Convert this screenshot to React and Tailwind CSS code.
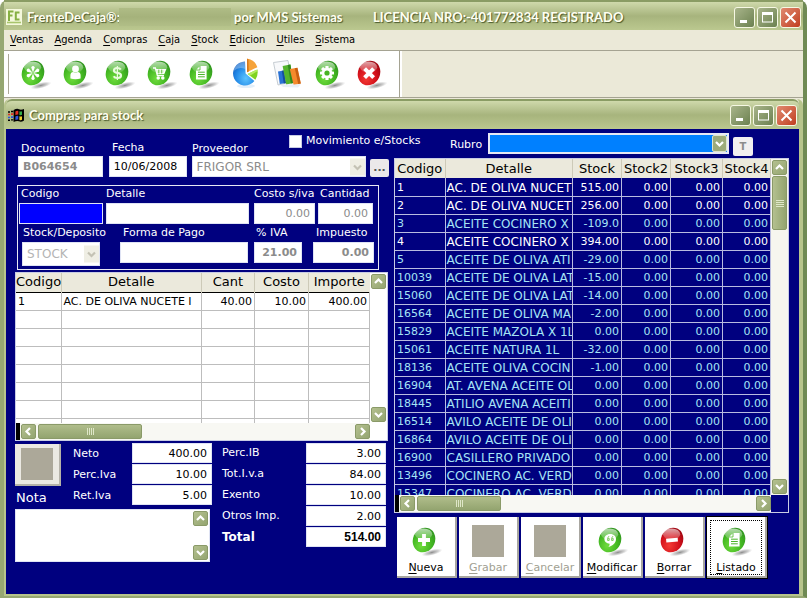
import { useState } from 'react';
import { clsx } from 'clsx';

const menus = ['Ventas', 'Agenda', 'Compras', 'Caja', 'Stock', 'Edicion', 'Utiles', 'Sistema'];

const stockRows = [
  ['1', 'AC. DE OLIVA NUCET', '515.00'],
  ['2', 'AC. DE OLIVA NUCET', '256.00'],
  ['3', 'ACEITE COCINERO X', '-109.0'],
  ['4', 'ACEITE COCINERO X', '394.00'],
  ['5', 'ACEITE DE OLIVA ATI', '-29.00'],
  ['10039', 'ACEITE DE OLIVA LAT', '-15.00'],
  ['15060', 'ACEITE DE OLIVA LAT', '-14.00'],
  ['16564', 'ACEITE DE OLIVA MA', '-2.00'],
  ['15829', 'ACEITE MAZOLA X 1L', '0.00'],
  ['15061', 'ACEITE NATURA 1L', '-32.00'],
  ['18136', 'ACEITE OLIVA COCIN', '-1.00'],
  ['16904', 'AT. AVENA ACEITE OL', '0.00'],
  ['18445', 'ATILIO AVENA ACEITI', '0.00'],
  ['16514', 'AVILO ACEITE DE OLI', '0.00'],
  ['16864', 'AVILO ACEITE DE OLI', '0.00'],
  ['16900', 'CASILLERO PRIVADO', '0.00'],
  ['13496', 'COCINERO AC. VERD', '0.00'],
  ['15347', 'COCINERO AC. VERD', '0.00'],
];

const itemRows = [
  ['1', 'AC. DE OLIVA NUCETE I', '40.00', '10.00', '400.00'],
  ...Array.from({ length: 7 }, () => ['', '', '', '', '']),
];

/* ---------- icons ---------- */

function Gradients() {
  return (
    <svg width="0" height="0" className="absolute" aria-hidden="true">
      <defs>
        <radialGradient id="orbGreen" cx="0.5" cy="0.75" r="0.75">
          <stop offset="0" stopColor="#6fdc3c" />
          <stop offset="0.6" stopColor="#43b722" />
          <stop offset="1" stopColor="#2f931e" />
        </radialGradient>
        <radialGradient id="orbRed" cx="0.5" cy="0.75" r="0.75">
          <stop offset="0" stopColor="#f33a34" />
          <stop offset="0.6" stopColor="#d3101a" />
          <stop offset="1" stopColor="#9c0510" />
        </radialGradient>
        <linearGradient id="orbGloss" x1="0" y1="0" x2="0" y2="1">
          <stop offset="0" stopColor="#fff" stopOpacity="0.65" />
          <stop offset="1" stopColor="#fff" stopOpacity="0.1" />
        </linearGradient>
        <radialGradient id="orbShadow">
          <stop offset="0" stopColor="#666" stopOpacity="0.75" />
          <stop offset="0.6" stopColor="#999" stopOpacity="0.45" />
          <stop offset="1" stopColor="#bbb" stopOpacity="0" />
        </radialGradient>
        <radialGradient id="pieBlue" cx="0.6" cy="0.7" r="0.8">
          <stop offset="0" stopColor="#5cc4ff" />
          <stop offset="0.6" stopColor="#2187e6" />
          <stop offset="1" stopColor="#1257b8" />
        </radialGradient>
      </defs>
    </svg>
  );
}

const glyphs = {
  asterisk: (
    <g fill="#fff">
      {[0, 60, 120, 180, 240, 300].map((a) => (
        <path key={a} d="M13 12.8 L11.2 7.2 Q13 4.6 14.8 7.2 Z" transform={`rotate(${a} 13 13)`} />
      ))}
    </g>
  ),
  user: (
    <g fill="#fff">
      <circle cx="13.5" cy="9" r="3.4" />
      <path d="M8.4 18.5 V15.5 Q8.4 12.4 11.2 12 Q13.5 13.6 15.8 12 Q18.6 12.4 18.6 15.5 V18.5 Q13.5 20 8.4 18.5 Z" />
    </g>
  ),
  money: (
    <g fill="none" stroke="#e9fbdc" strokeWidth="2.2">
      <path d="M16.8 9.6 Q15.8 8 13.2 8 Q10 8 10 10.4 Q10 12.4 13.3 12.9 Q17 13.4 17 15.6 Q17 18 13.6 18 Q10.6 18 9.7 16.2" />
      <path d="M13.4 6 V20" strokeWidth="1.3" />
    </g>
  ),
  cart: (
    <g fill="none" stroke="#fff" strokeWidth="1.3">
      <path d="M7 8 H9.4 L11.4 15.6 H18" />
      <path d="M9.8 9.6 H19.4 L17.8 13.6 H11" fill="#e6f9da" />
      <path d="M12.8 9.6 V13.4 M15.7 9.6 V13.4" stroke="#45b022" strokeWidth="0.8" />
      <circle cx="12.2" cy="18" r="1.1" fill="#fff" />
      <circle cx="16.8" cy="18" r="1.1" fill="#fff" />
    </g>
  ),
  doc: (
    <g>
      <path d="M12 6 H18.6 V19.4 H8 V10 Z" fill="#fff" />
      <path d="M12 6 V10 H8" fill="none" stroke="#4cb52a" strokeWidth="0.8" />
      <path d="M10 12.2 H16.8 M10 14.5 H16.8 M10 16.8 H16.8" stroke="#4cb52a" strokeWidth="1" />
    </g>
  ),
  gear: (
    <g>
      {[0, 45, 90, 135].map((a) => (
        <rect key={a} x="11.4" y="6" width="3.2" height="14" rx="0.6" fill="#fff" transform={`rotate(${a} 13 13)`} />
      ))}
      <circle cx="13" cy="13" r="5.2" fill="#fff" />
      <circle cx="13" cy="13" r="2.6" fill="#47b323" />
    </g>
  ),
  close: <path d="M8.6 8.6 L17.6 17.6 M17.6 8.6 L8.6 17.6" stroke="#fff" strokeWidth="4" />,
  plus: <path d="M13 7 V19 M7 13 H19" stroke="#fff" strokeWidth="3.8" />,
  minus: <path d="M7.2 13.6 L18.8 12.6" stroke="#fff" strokeWidth="3.8" />,
  quote: (
    <g>
      <path d="M13.2 7 C17 7 19 9.4 19 12 C19 16 15.8 18.6 11.4 20 Q13 18 12.6 16.8 C9.4 16.6 7.4 14.8 7.4 12 C7.4 9.4 9.6 7 13.2 7 Z" fill="#fff" />
      <path d="M11.9 9.2 Q10.4 10.4 10.6 13.4 H12.2 V11.4 H11.2 M15.9 9.2 Q14.4 10.4 14.6 13.4 H16.2 V11.4 H15.2" fill="none" stroke="#6cc24a" strokeWidth="0.9" />
    </g>
  ),
};

function Orb({ glyph, red }) {
  return (
    <svg width="32" height="32" viewBox="0 0 32 32" aria-hidden="true">
      <ellipse cx="20" cy="27.4" rx="10.8" ry="3" fill="url(#orbShadow)" transform="rotate(-14 20 27.4)" />
      <g transform="translate(-1 2)">
        <ellipse cx="13" cy="13" rx="11" ry="12.6" fill={red ? 'url(#orbRed)' : 'url(#orbGreen)'} transform="rotate(25 13 13)" />
        <ellipse cx="12.6" cy="7.2" rx="8.6" ry="5.8" fill="url(#orbGloss)" />
        {glyphs[glyph]}
      </g>
    </svg>
  );
}

function PieIcon() {
  return (
    <svg width="32" height="32" viewBox="0 0 32 32" aria-hidden="true">
      <ellipse cx="15" cy="28" rx="9" ry="2" fill="#cfe4f7" opacity="0.6" />
      <path d="M14 3.5 A12 12 0 1 0 23.4 23 L14.6 15.5 Z" fill="url(#pieBlue)" />
      <path d="M14 3.5 A12 12 0 0 0 2.5 13 Q8 8 14.3 11 Z" fill="#fff" opacity="0.3" />
      <path d="M16 14.2 L16 0.8 A12.6 12.6 0 0 1 26.4 9.2 Z" fill="#f5a33a" />
      <path d="M16 14.2 L16 0.8 L17.4 1 L17.8 13.4 Z" fill="#d9781b" />
      <path d="M16.6 16 L26.4 11.4 Q27.4 17.6 24.4 21.8 Z" fill="#7ed321" />
      <path d="M16.6 16 L26.4 11.4 L26.6 13 L19.4 17.6 Z" fill="#b6ec62" />
    </svg>
  );
}

function ChartIcon() {
  return (
    <svg width="32" height="32" viewBox="0 0 32 32" aria-hidden="true">
      <path d="M0.5 4.5 L15 2.5 L18.5 24 L5 27 Z" fill="#f8f9fb" stroke="#b9c0c8" strokeWidth="0.8" />
      <path d="M5 13.5 L11 12.4 L13 25 L6.8 26 Z" fill="#2a72d4" />
      <path d="M8.8 12.8 L11 12.4 L13 25 L10.8 25.4 Z" fill="#164ea0" />
      <path d="M9.6 8 L17.4 6.6 L20.4 25 L13.2 26.4 Z" fill="#54b52c" />
      <path d="M14.8 7 L17.4 6.6 L20.4 25 L17.8 25.6 Z" fill="#2f8a1d" />
      <path d="M16.8 11 L24.4 9.8 L27.8 25.4 L20.6 27 Z" fill="#f58a2c" />
      <path d="M21.8 10.2 L24.4 9.8 L27.8 25.4 L25.2 26 Z" fill="#c85f12" />
      <path d="M7.2 26.4 L27.8 26.2 L25 29.4 L10 29 Z" fill="#dfe8f2" opacity="0.7" />
    </svg>
  );
}

function AppLogo() {
  return (
    <svg width="16" height="16" viewBox="0 0 16 16" aria-hidden="true">
      <rect width="16" height="16" fill="#f4f8dc" />
      <path d="M3 12 V2.5 H7.5 M3 6.5 H6.5" fill="none" stroke="#86b043" strokeWidth="2" />
      <path d="M13.5 3.5 H9.8 V10.5 H13.5" fill="none" stroke="#86b043" strokeWidth="2" />
      <path d="M1 13.5 H15" stroke="#a8c56c" strokeWidth="1.6" />
    </svg>
  );
}

function FlagIcon() {
  return (
    <svg width="16" height="15" viewBox="0 0 16 14" aria-hidden="true">
      <path d="M5.6 1.6 Q9 -0.4 11 0.7 Q13 1.7 16 0.4 V12 Q13 14 11 12.8 Q9 11.8 5.6 13.6 Z" fill="#000" />
      <path d="M7.4 3 Q9 2 10.3 2.5 V6 Q9 5.7 7.4 6.6 Z" fill="#e03024" />
      <path d="M11.4 2.8 Q12.8 3.4 14 2.8 V6.3 Q12.8 7 11.4 6.4 Z" fill="#35b14a" />
      <path d="M7.4 8 Q9 7 10.3 7.4 V11 Q9 10.6 7.4 11.5 Z" fill="#2f55d8" />
      <path d="M11.4 7.8 Q12.8 8.4 14 7.8 V11.3 Q12.8 12 11.4 11.4 Z" fill="#f2d22e" />
      <path d="M0 3.5 H2 M3 3 H5.4" stroke="#000" strokeWidth="1.4" />
      <path d="M0 6 H2 M3 5.6 H5.4" stroke="#e03024" strokeWidth="1.6" />
      <path d="M0 9 H2 M3 8.6 H5.4" stroke="#2f55d8" strokeWidth="1.6" />
      <path d="M0 11.8 H2 M3 11.4 H5.4" stroke="#000" strokeWidth="1.4" />
    </svg>
  );
}

const arrows = {
  up: 'M3 8 L6.5 4.5 L10 8',
  down: 'M3 5 L6.5 8.5 L10 5',
  left: 'M8 3 L4.5 6.5 L8 10',
  right: 'M5 3 L8.5 6.5 L5 10',
};

function Arrow({ dir, color = '#fff' }) {
  return (
    <svg width="13" height="13" viewBox="0 0 13 13" aria-hidden="true">
      <path d={arrows[dir]} fill="none" stroke={color} strokeWidth="2.2" />
    </svg>
  );
}

/* ---------- window chrome ---------- */

function CaptionButton({ kind }) {
  return (
    <button
      type="button"
      aria-label={kind}
      className={clsx(
        'w-[21px] h-[21px] rounded-[3px] border border-[#f6f8e4] flex items-center justify-center',
        kind === 'close'
          ? 'bg-linear-to-br from-[#e08a70] to-[#c03c1c]'
          : 'bg-linear-to-br from-[#a9b58b] to-[#6c8150]'
      )}
    >
      <svg width="17" height="17" viewBox="0 0 17 17" fill="none" stroke="#fff" aria-hidden="true">
        {kind === 'minimize' && <path d="M4 12.5 H11" strokeWidth="3" />}
        {kind === 'maximize' && (
          <>
            <rect x="3.5" y="4" width="10" height="9" strokeWidth="1" />
            <path d="M3 4.5 H14" strokeWidth="3" />
          </>
        )}
        {kind === 'close' && <path d="M3.5 3.5 L13.5 13.5 M13.5 3.5 L3.5 13.5" strokeWidth="2" />}
      </svg>
    </button>
  );
}

function TitleBar({ icon, children, className }) {
  return (
    <header
      className={clsx(
        'flex items-center gap-[5px] bg-linear-to-b from-[#cfd9ab] via-[#a7b47d] to-[#bbc88f] font-[Lato,sans-serif] font-bold text-[13px] leading-4 text-[#fffff2] [text-shadow:1px_1px_1px_#4a5a2c]',
        className
      )}
    >
      {icon}
      <div className="flex-1 flex items-center whitespace-nowrap">{children}</div>
      <div className="flex gap-[2px]">
        <CaptionButton kind="minimize" />
        <CaptionButton kind="maximize" />
        <CaptionButton kind="close" />
      </div>
    </header>
  );
}

function ScrollButton({ dir }) {
  return (
    <button
      type="button"
      aria-label={dir}
      className="w-[15px] h-[15px] shrink-0 rounded-[2px] border border-[#8a9a68] bg-linear-to-br from-[#b4c08f] to-[#94a571] flex items-center justify-center"
    >
      <Arrow dir={dir} />
    </button>
  );
}

function VScroll({ thumb, header }) {
  return (
    <div className={clsx('w-[17px] shrink-0 flex flex-col items-center justify-between py-px', header ? 'bg-[#f6f6ee]' : 'bg-white')}>
      <div className="flex flex-col items-center gap-px">
        <ScrollButton dir="up" />
        {thumb && (
          <div className="w-[15px] h-[54px] rounded-[2px] border border-[#8a9a68] bg-linear-to-r from-[#b4c08f] to-[#93a46f] flex flex-col items-center justify-center gap-px">
            {[0, 1, 2, 3].map((i) => (
              <span key={i} className="w-2 h-px bg-[#dfe7c8]" />
            ))}
          </div>
        )}
      </div>
      <ScrollButton dir="down" />
    </div>
  );
}

function HScroll({ thumbClass, corner }) {
  return (
    <div className="flex h-[17px] shrink-0 bg-[#f8f8f3]">
      <div className="w-1 bg-black" />
      <div className="flex-1 flex items-center gap-[2px] pl-px">
        <ScrollButton dir="left" />
        <div className={clsx('h-[15px] rounded-[2px] border border-[#8a9a68] bg-linear-to-b from-[#b0bd8b] to-[#93a46f] flex items-center justify-center gap-px', thumbClass)}>
          {[0, 1, 2, 3].map((i) => (
            <span key={i} className="w-px h-[7px] bg-[#dfe7c8]" />
          ))}
        </div>
        <div className="flex-1" />
        <ScrollButton dir="right" />
      </div>
      <div className={clsx('w-[17px]', corner)} />
    </div>
  );
}

/* ---------- form pieces ---------- */

const inputBase = 'block h-[21px] w-full min-w-0 border leading-4 outline-none';
const numeric = 'bg-white border-[#dfe3f4] text-[11px] px-1 text-right text-[#8b8b8b]';

function Field({ id, label, value = '', className, inputClass, disabled, labelClass }) {
  const [text, setText] = useState(value);
  return (
    <div className={clsx('flex flex-col', className)}>
      <label htmlFor={id} className={clsx('whitespace-nowrap leading-[14px] h-4', labelClass)}>{label}</label>
      <input
        id={id}
        value={text}
        disabled={disabled}
        onChange={(e) => setText(e.target.value)}
        className={clsx(inputBase, inputClass)}
      />
    </div>
  );
}

function DisabledSelect({ id, value, className, textClass }) {
  return (
    <div className={clsx('relative', className)}>
      <select id={id} disabled className={clsx('appearance-none block w-full h-full bg-white border border-[#dfe3f4] px-1 text-[12px] leading-4 opacity-100', textClass)}>
        <option>{value}</option>
      </select>
      <span className="absolute right-px top-1/2 -translate-y-1/2 w-[15px] h-[17px] bg-[#efeee4] flex items-center justify-center pointer-events-none">
        <Arrow dir="down" color="#c4c2b4" />
      </span>
    </div>
  );
}

function TotalRow({ id, label, value, labelClass, bold }) {
  return (
    <div className="flex items-center">
      <label htmlFor={id} className={clsx('shrink-0 whitespace-nowrap', labelClass, bold && 'font-bold text-[12px]')}>{label}</label>
      <input
        id={id}
        defaultValue={value}
        className={clsx(
          'block h-5 w-20 bg-white border border-[#dfe3f4] px-1 text-right text-black outline-none',
          bold ? 'font-[Liberation_Sans,sans-serif] font-bold text-[12px]' : 'text-[11px]'
        )}
      />
    </div>
  );
}

function ActionButton({ label, glyph, red, disabled, focused }) {
  return (
    <button
      type="button"
      disabled={disabled}
      className={clsx(
        'w-[60px] h-[61px] bg-white border-r-2 border-b-2 border-[#a8a6a0] px-[3px] pt-[3px] pb-px',
        focused && 'outline outline-black'
      )}
    >
      <span
        className={clsx(
          'h-full flex flex-col items-center justify-between text-[11px] leading-[13px] whitespace-nowrap',
          focused ? 'border border-dotted border-black' : 'border border-transparent',
          disabled ? 'text-[#a19f92]' : 'text-black'
        )}
      >
        <span className="h-9 flex items-end">
          {disabled ? <span className="w-8 h-8 bg-[#aca899]" /> : <span className="pl-1"><Orb glyph={glyph} red={red} /></span>}
        </span>
        <span>
          <u className="underline-offset-2">{label[0]}</u>
          {label.slice(1)}
        </span>
      </span>
    </button>
  );
}

/* ---------- tables ---------- */

function ItemsTable() {
  return (
    <div className="border border-[#c8cce4] bg-white text-black">
      <div className="flex">
        <div className="flex-1 min-w-0 h-[150px] overflow-hidden">
          <table className="w-full table-fixed border-collapse text-[11px]">
            <colgroup>
              <col className="w-[45px]" />
              <col />
              <col className="w-[53px]" />
              <col className="w-[54px]" />
              <col className="w-[61px]" />
            </colgroup>
            <thead>
              <tr className="h-[19px] bg-[#ebe9dc] border-b border-black text-[13px] leading-4">
                {['Codigo', 'Detalle', 'Cant', 'Costo', 'Importe'].map((h) => (
                  <th key={h} className="font-normal p-0 border-r border-[#cdcab8] last:border-r-0 whitespace-nowrap">{h}</th>
                ))}
              </tr>
            </thead>
            <tbody>
              {itemRows.map((row, r) => (
                <tr key={r} className="h-[18px] border-b border-[#bdbdbd]">
                  {row.map((cell, c) => (
                    <td
                      key={c}
                      className={clsx(
                        'border-r border-[#bdbdbd] pt-[2px] pb-0 pl-[2px] leading-[14px] whitespace-nowrap overflow-hidden',
                        c > 1 ? 'text-right pr-[2px]' : 'pr-0'
                      )}
                    >
                      {cell}
                    </td>
                  ))}
                </tr>
              ))}
            </tbody>
          </table>
        </div>
        <VScroll />
      </div>
      <HScroll thumbClass="w-[104px]" corner="bg-white" />
    </div>
  );
}

function StockTable() {
  return (
    <div className="border border-[#c8cce4] bg-[#00007f]">
      <div className="flex">
        <div className="flex-1 min-w-0 h-[336px] overflow-hidden">
          <table className="w-full table-fixed border-collapse text-[11px]">
            <colgroup>
              <col className="w-[50px]" />
              <col />
              <col className="w-[49px]" />
              <col className="w-[49px]" />
              <col className="w-[52px]" />
              <col className="w-[48px]" />
            </colgroup>
            <thead>
              <tr className="h-[19px] bg-[#ebe9dc] text-black text-[13px] leading-4">
                {['Codigo', 'Detalle', 'Stock', 'Stock2', 'Stock3', 'Stock4'].map((h) => (
                  <th key={h} className="font-normal p-0 border-r border-[#cdcab8] whitespace-nowrap">{h}</th>
                ))}
              </tr>
            </thead>
            <tbody>
              {stockRows.map(([code, name, stock]) => (
                <tr key={code} className={clsx('h-[18px] border-b border-[#b9bce0]', parseFloat(stock) > 0 ? 'text-white' : 'text-[#a6e4f6]')}>
                  <td className="border-r border-[#b9bce0] pt-[2px] pb-0 px-[2px] leading-[14px]">{code}</td>
                  <td className="border-r border-[#b9bce0] pt-[2px] pb-0 pl-px pr-0 text-[12px] leading-[14px] whitespace-nowrap overflow-hidden">{name}</td>
                  {[stock, '0.00', '0.00', '0.00'].map((n, i) => (
                    <td key={i} className="border-r border-[#b9bce0] pt-[2px] pb-0 px-[2px] leading-[14px] text-right">{n}</td>
                  ))}
                </tr>
              ))}
            </tbody>
          </table>
        </div>
        <VScroll thumb header />
      </div>
      <HScroll thumbClass="w-[84px]" corner="bg-[#00007f]" />
    </div>
  );
}

/* ---------- screens ---------- */

function ComprasForm() {
  const [moves, setMoves] = useState(false);

  return (
    <main className="flex-1 bg-[#00007f] text-white text-[11px] font-[Verdana,DejaVu_Sans,sans-serif] flex flex-col">
      <div className="flex items-end h-[27px] pt-1 pl-[15px] pr-[46px] leading-[14px] whitespace-nowrap">
        <label htmlFor="documento" className="w-[91px]">Documento</label>
        <label htmlFor="fecha" className="w-[80px] pb-px">Fecha</label>
        <label htmlFor="proveedor" className="w-[97px]">Proveedor</label>
        <label className="w-[161px] self-start flex items-center gap-1 pt-px">
          <input
            type="checkbox"
            checked={moves}
            onChange={(e) => setMoves(e.target.checked)}
            className="appearance-none w-[13px] h-[13px] bg-white border border-[#c8cce4] checked:bg-[#7d9a4a]"
          />
          Movimiento e/Stocks
        </label>
        <label htmlFor="rubro" className="w-[38px] pb-1">Rubro</label>
        <div className="relative flex-1 h-[21px] self-start border-2 border-[#e6e8f4] bg-[#0080ff]">
          <select id="rubro" className="appearance-none block w-full h-full px-1 outline-none">
            <option></option>
          </select>
          <span className="absolute right-0 top-0 w-[15px] h-full bg-[#9dab7b] border border-[#dfe5cc] rounded-[2px] flex items-center justify-center pointer-events-none">
            <Arrow dir="down" />
          </span>
        </div>
        <button type="button" className="ml-1 w-5 h-[19px] bg-[#f1eff0] rounded-[2px] font-bold text-[10px] text-[#8c8c8c]">T</button>
      </div>

      <div className="flex gap-[5px] pl-[9px] pr-[10px]">
        <section className="w-[374px] shrink-0 flex flex-col">
          <div className="flex items-end pl-[3px]">
            <div className="w-[85px] mr-[6px]">
              <input id="documento" disabled defaultValue="B064654" className={clsx(inputBase, 'bg-white border-[#dfe3f4] px-1 font-bold text-[11px] text-[#8b8b8b]')} />
            </div>
            <div className="w-[78px] mr-[5px]">
              <input id="fecha" defaultValue="10/06/2008" className={clsx(inputBase, 'bg-white border-[#dfe3f4] px-1 text-[11px] text-black')} />
            </div>
            <DisabledSelect id="proveedor" value="FRIGOR SRL" className="w-[175px] h-[21px] mr-1" textClass="text-[#8b8b8b]" />
            <button type="button" className="w-[19px] h-[18px] bg-[#ebe9ea] rounded-[2px] font-bold text-[#555] leading-3">...</button>
          </div>

          <div className="mt-2 ml-[2px] mr-[10px] border border-[#e8e8f4] pt-px pb-[3px]">
            <div className="flex pl-px">
              <Field id="codigo" label="Codigo" className="w-[84px] mr-[3px]" labelClass="pl-[2px]" inputClass="bg-[#0000ff] border-[#dfe3f4] px-1 text-[11px] text-white" />
              <Field id="detalle" label="Detalle" className="w-[143px] mr-[5px]" inputClass="bg-white border-[#dfe3f4] px-1 text-[11px] text-black" />
              <Field id="costo" label="Costo s/iva" value="0.00" disabled className="w-[61px] mr-[3px]" inputClass={numeric} />
              <Field id="cantidad" label="Cantidad" value="0.00" disabled className="w-[55px]" labelClass="pl-[2px]" inputClass={numeric} />
            </div>
            <div className="flex pl-1 pt-[2px]">
              <div className="w-[98px]">
                <label htmlFor="deposito" className="block leading-[14px] h-4 pl-px whitespace-nowrap">Stock/Deposito</label>
                <DisabledSelect id="deposito" value="STOCK" className="w-[78px] h-[24px]" textClass="text-[#b4b4b4]" />
              </div>
              <Field id="pago" label="Forma de Pago" className="w-[128px] mr-[6px]" labelClass="pl-[3px]" inputClass="bg-white border-[#dfe3f4] px-1 text-[11px] text-black" />
              <Field id="iva" label="% IVA" value="21.00" disabled className="w-[48px] mr-[11px]" labelClass="pl-[2px]" inputClass={clsx(numeric, 'font-bold')} />
              <Field id="impuesto" label="Impuesto" value="0.00" disabled className="w-[61px]" labelClass="pl-[3px]" inputClass={clsx(numeric, 'font-bold')} />
            </div>
          </div>

          <div className="mt-[2px] mr-px">
            <ItemsTable />
          </div>

          <div className="flex gap-[10px] pt-[2px]">
            <div className="w-[197px]">
              <div className="flex h-[66px]">
                <div className="w-[58px] flex flex-col items-start justify-between pb-[3px] pt-px">
                  <button type="button" aria-label="nota" className="w-[46px] h-[42px] bg-[#ebe9e2] border-r-2 border-b-2 border-[#b5b2a8] flex items-center justify-center">
                    <span className="w-8 h-8 bg-[#aca899]" />
                  </button>
                  <label htmlFor="nota" className="text-[13px] leading-4 pl-px">Nota</label>
                </div>
                <div className="flex flex-col gap-px">
                  <TotalRow id="neto" label="Neto" value="400.00" labelClass="w-[59px] pt-[3px]" />
                  <TotalRow id="perciva" label="Perc.Iva" value="10.00" labelClass="w-[59px] pt-[3px]" />
                  <TotalRow id="retiva" label="Ret.Iva" value="5.00" labelClass="w-[59px] pt-[3px]" />
                </div>
              </div>
              <div className="flex w-[195px] h-[53px] bg-white border border-[#dfe3f4]">
                <textarea id="nota" className="flex-1 min-w-0 resize-none px-1 text-black outline-none" />
                <VScroll />
              </div>
            </div>
            <div className="flex flex-col gap-px">
              <TotalRow id="percib" label="Perc.IB" value="3.00" labelClass="w-[84px]" />
              <TotalRow id="totiva" label="Tot.I.v.a" value="84.00" labelClass="w-[84px]" />
              <TotalRow id="exento" label="Exento" value="10.00" labelClass="w-[84px]" />
              <TotalRow id="otros" label="Otros Imp." value="2.00" labelClass="w-[84px]" />
              <TotalRow id="total" label="Total" value="514.00" labelClass="w-[84px]" bold />
            </div>
          </div>
        </section>

        <section className="flex-1 min-w-0 pt-[2px]">
          <StockTable />
          <div className="flex gap-[2px] pt-1 pl-[3px]">
            <ActionButton label="Nueva" glyph="plus" />
            <ActionButton label="Grabar" disabled />
            <ActionButton label="Cancelar" disabled />
            <ActionButton label="Modificar" glyph="quote" />
            <ActionButton label="Borrar" glyph="minus" red />
            <ActionButton label="Listado" glyph="doc" focused />
          </div>
        </section>
      </div>
    </main>
  );
}

export default function App() {
  return (
    <div className="min-h-screen flex flex-col bg-[#ebe9d8] border-x-4 border-b-2 border-[#96a772] border-r-[#6f8a54] rounded-t-lg">
      <Gradients />
      <TitleBar className="h-[30px] shrink-0 pl-[2px] pr-[2px] pt-[2px] border-t-2 border-[#8a9c64]" icon={<AppLogo />}>
        <span className="w-[92px]">FrenteDeCaja®:</span>
        <span className="w-[112px] h-[18px] mr-[3px] bg-linear-to-b from-[#afbc86] via-[#a5b27b] to-[#b1be87]" />
        <span className="w-[139px]">por MMS Sistemas</span>
        <span>LICENCIA NRO:-401772834 REGISTRADO</span>
      </TitleBar>

      <nav className="flex items-center gap-[11px] h-5 shrink-0 pl-[6px] font-[Tahoma,DejaVu_Sans_Condensed,sans-serif] text-[11px] text-black">
        {menus.map((m) => (
          <button key={m} type="button">
            <u className="underline-offset-2">{m[0]}</u>
            {m.slice(1)}
          </button>
        ))}
      </nav>

      <div className="flex h-[48px] shrink-0 border-y border-[#a5a392]">
        <div className="flex items-center bg-white border-r border-[#a5a392] w-[396px]">
          <span className="ml-1 mr-3 w-px h-10 bg-[#aca899]" />
          <div className="flex gap-[10px]">
            {['asterisk', 'user', 'money', 'cart', 'doc'].map((g) => (
              <button key={g} type="button" aria-label={g}><Orb glyph={g} /></button>
            ))}
            <button type="button" aria-label="pie"><PieIcon /></button>
            <button type="button" aria-label="chart"><ChartIcon /></button>
            <button type="button" aria-label="gear"><Orb glyph="gear" /></button>
            <button type="button" aria-label="exit"><Orb glyph="close" red /></button>
          </div>
        </div>
        <div className="flex-1 border-l-2 border-white" />
      </div>

      <div className="flex-1 flex flex-col mt-px border-l-2 border-r-4 border-b-2 border-[#b7c48c] rounded-t-md">
        <TitleBar className="h-[30px] shrink-0 pl-[2px] pr-[2px] border-t-2 border-[#8a9c64] rounded-t-md" icon={<FlagIcon />}>
          <span>Compras para stock</span>
        </TitleBar>
        <ComprasForm />
      </div>
    </div>
  );
}
